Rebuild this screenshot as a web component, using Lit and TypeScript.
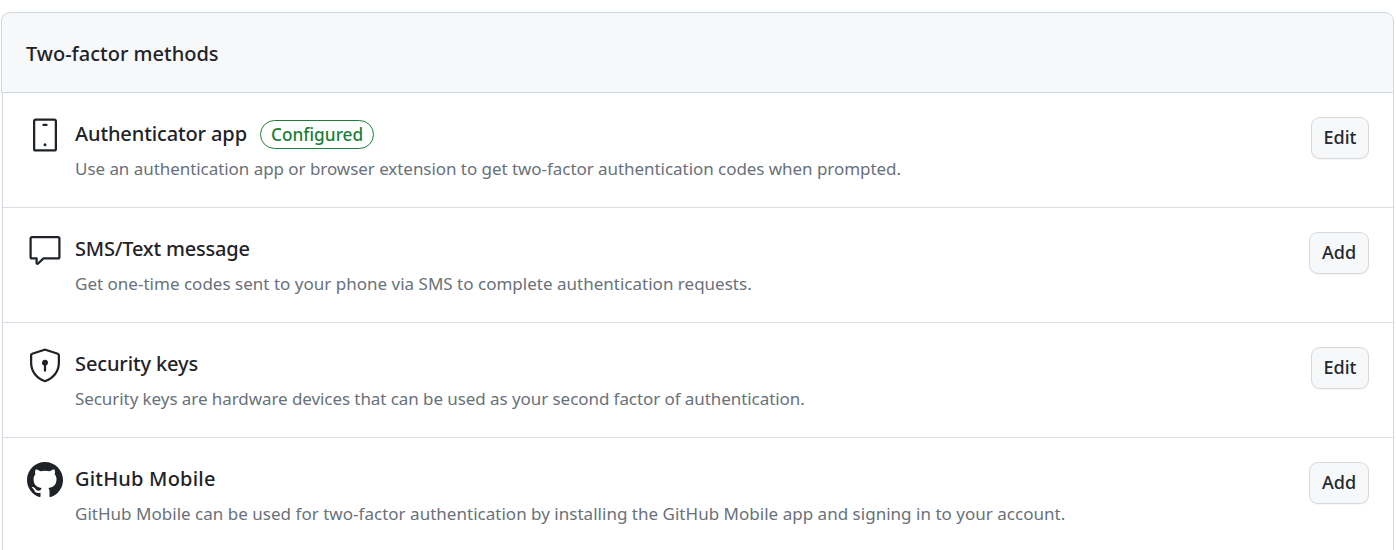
import { LitElement, html, css, svg } from "lit";
import { customElement } from "lit/decorators.js";

const icons = {
  mobile: svg`<path d="M10.25 5.25A.75.75 0 0 1 11 4.5h2A.75.75 0 0 1 13 6h-2a.75.75 0 0 1-.75-.75ZM12 19.5a1 1 0 1 0 0-2 1 1 0 0 0 0 2Z"/><path d="M4 2.75C4 1.784 4.784 1 5.75 1h12.5c.966 0 1.75.784 1.75 1.75v18.5A1.75 1.75 0 0 1 18.25 23H5.75A1.75 1.75 0 0 1 4 21.25Zm1.75-.25a.25.25 0 0 0-.25.25v18.5c0 .138.112.25.25.25h12.5a.25.25 0 0 0 .25-.25V2.75a.25.25 0 0 0-.25-.25Z"/>`,
  comment: svg`<path fill="none" stroke="#1f2328" stroke-width="1.5" stroke-linejoin="round" d="M3.4 3.4h17.2c.55 0 1 .45 1 1v12.2c0 .55-.45 1-1 1H11l-3.6 3.4c-.4.35-1 .1-1-.4v-3H3.4c-.55 0-1-.45-1-1V4.4c0-.55.45-1 1-1Z"/>`,
  shield: svg`<path d="M12.077 2.563a.25.25 0 0 0-.154 0L3.673 5.24a.249.249 0 0 0-.173.237V10.5c0 5.461 3.28 9.483 8.43 11.426a.199.199 0 0 0 .14 0c5.15-1.943 8.43-5.965 8.43-11.426V5.476a.25.25 0 0 0-.173-.237ZM11.46 1.137a1.75 1.75 0 0 1 1.08 0l8.25 2.675A1.75 1.75 0 0 1 22 5.476V10.5c0 6.19-3.77 10.705-9.401 12.83a1.704 1.704 0 0 1-1.198 0C5.771 21.204 2 16.69 2 10.5V5.476c0-.76.49-1.43 1.21-1.664Z"/><path d="M14 10.5a2 2 0 0 1-1.25 1.855v3.395a.75.75 0 0 1-1.5 0v-3.395A2 2 0 1 1 14 10.5"/>`,
  github: svg`<path d="M8 0c4.42 0 8 3.58 8 8a8.013 8.013 0 0 1-5.45 7.59c-.4.08-.55-.17-.55-.38 0-.27.01-1.13.01-2.2 0-.75-.25-1.23-.54-1.48 1.78-.2 3.65-.88 3.65-3.95 0-.88-.31-1.59-.82-2.15.08-.2.36-1.02-.08-2.12 0 0-.67-.22-2.2.82-.64-.18-1.32-.27-2-.27-.68 0-1.36.09-2 .27-1.53-1.03-2.2-.82-2.2-.82-.44 1.1-.16 1.92-.08 2.12-.51.56-.82 1.28-.82 2.15 0 3.06 1.86 3.75 3.64 3.95-.23.2-.44.55-.51 1.07-.46.21-1.61.55-2.33-.66-.15-.24-.6-.83-1.23-.82-.67.01-.27.38.01.53.34.19.73.9.82 1.13.16.45.68 1.31 2.69.94 0 .67.01 1.3.01 1.49 0 .21-.15.45-.55.38A7.995 7.995 0 0 1 0 8c0-4.42 3.58-8 8-8Z"/>`,
};

const rows = [
  { icon: icons.mobile, box: "0 0 24 24", title: "Authenticator app", badge: "Configured", desc: "Use an authentication app or browser extension to get two-factor authentication codes when prompted.", action: "Edit", btnWidth: 58, track: -0.05, titleTrack: -0.12 },
  { icon: icons.comment, box: "0 0 24 24", title: "SMS/Text message", desc: "Get one-time codes sent to your phone via SMS to complete authentication requests.", action: "Add", btnWidth: 60, track: 0.01, titleTrack: -0.2 },
  { icon: icons.shield, box: "0 0 24 24", title: "Security keys", desc: "Security keys are hardware devices that can be used as your second factor of authentication.", action: "Edit", btnWidth: 58, track: -0.07, titleTrack: -0.12 },
  { icon: icons.github, box: "0 0 16 16", title: "GitHub Mobile", desc: "GitHub Mobile can be used for two-factor authentication by installing the GitHub Mobile app and signing in to your account.", action: "Add", btnWidth: 60, track: 0.02, titleTrack: 0.2 },
];

@customElement("app-root")
export class AppRoot extends LitElement {
  static styles = css`
    :host {
      display: block;
      height: 550px;
      overflow: hidden;
      background: #fff;
      color: #1f2328;
      font-family: "Noto Sans", sans-serif;
    }
    .card {
      margin: 12px 2px 0 1px;
    }
    .header {
      height: 81px;
      box-sizing: border-box;
      display: flex;
      align-items: center;
      padding: 1px 0 0 24px;
      background: #f6f8fa;
      border: 1px solid #d0d7de;
      border-radius: 9px 9px 0 0;
      font-size: 20px;
      font-weight: 500;
      letter-spacing: 0;
    }
    .body {
      margin-left: 1px;
      border-left: 1px solid #d0d7de;
      border-right: 1px solid #d0d7de;
    }
    .row {
      height: 115px;
      box-sizing: border-box;
      padding: 24px 24px 0 24px;
      display: flex;
      gap: 12px;
      border-bottom: 1px solid #d8dee4;
    }
    .row:last-child { border-bottom: 0; }
    .icon { width: 36px; height: 36px; fill: #1f2328; flex: none; }
    .main { flex: 1; min-width: 0; }
    .title {
      display: flex;
      align-items: center;
      gap: 13px;
      height: 34px;
      font-size: 20px;
      font-weight: 500;
    }
    .name { padding-bottom: 2px; }
    .badge {
      height: 29px;
      box-sizing: border-box;
      display: flex;
      align-items: center;
      padding: 0 10px;
      border: 1px solid #1a7f37;
      border-radius: 15px;
      color: #1a7f37;
      font-size: 17.3px;
      font-weight: 500;
    }
    .desc {
      margin-top: 5px;
      font-size: 17px;
      line-height: 26px;
      color: #69717a;
    }
    .btn {
      flex: none;
      height: 42px;
      box-sizing: border-box;
      padding: 0 0 2px;
      background: #f6f8fa;
      border: 1px solid rgba(31, 35, 40, 0.15);
      border-radius: 9px;
      box-shadow: 0 1px 0 rgba(31, 35, 40, 0.04);
      color: #24292f;
      font: 500 18px "Noto Sans", sans-serif;
    }
  `;

  render() {
    return html`
      <div class="card">
        <div class="header">Two-factor methods</div>
        <div class="body">
          ${rows.map(
            (r) => html`
              <div class="row">
                <svg class="icon" viewBox=${r.box}>${r.icon}</svg>
                <div class="main">
                  <div class="title">
                    <span class="name" style="letter-spacing:${r.titleTrack}px">${r.title}</span>
                    ${r.badge ? html`<span class="badge">${r.badge}</span>` : ""}
                  </div>
                  <div class="desc" style="letter-spacing:${r.track}px">${r.desc}</div>
                </div>
                <button class="btn" style="width:${r.btnWidth}px">${r.action}</button>
              </div>
            `
          )}
        </div>
      </div>
    `;
  }
}
